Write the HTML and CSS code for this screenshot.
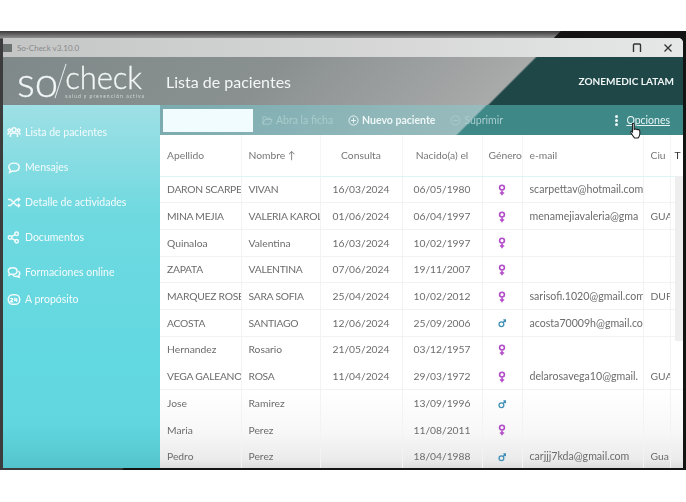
FILE: index.html
```html
<!DOCTYPE html>
<html lang="es">
<head>
    <meta charset="UTF-8">
    <meta name="viewport" content="width=device-width, initial-scale=1.0">
    <title>So-Check - Lista de pacientes</title>
    <link rel="stylesheet" href="styles.css">
</head>
<body>
    <!-- Gender icons, reused in the table -->
    <svg class="sprite">
        <symbol id="female" viewBox="0 0 10 15"><circle cx="5" cy="4.500" r="3"/><path d="M5 8v6M2.300 11.300h5.400"/></symbol>
        <symbol id="male" viewBox="0 0 10 15"><circle cx="4.300" cy="9" r="3"/><path d="M6.500 6.800l3-3M6.700 3.500h3v3"/></symbol>
    </svg>

    <div class="frame">
        <div class="window">
            <!-- Title bar -->
            <div class="titlebar">
                <span class="app-icon"></span>
                <span class="app-name">So-Check v3.10.0</span>
                <span class="win-btn">
                    <svg width="10" height="10" viewBox="0 0 10 10"><path d="M1.500 9V2a1 1 0 0 1 1-1h5a1 1 0 0 1 1 1v7" fill="none" stroke="#333" stroke-width="1.400"/></svg>
                </span>
                <span class="win-btn">
                    <svg width="10" height="10" viewBox="0 0 10 10"><path d="M1.500 1.500l7 7M8.500 1.500l-7 7" fill="none" stroke="#333" stroke-width="1.300"/></svg>
                </span>
            </div>

            <!-- Header -->
            <div class="header">
                <div class="logo">
                    <span class="logo-so">so</span>
                    <span class="logo-slash"></span>
                    <div class="logo-right">
                        <span class="logo-check">check</span>
                        <span class="logo-sub">salud y prevención activa</span>
                    </div>
                </div>
                <div class="page-title">Lista de pacientes</div>
                <div class="org">ZONEMEDIC LATAM</div>
            </div>

            <div class="main">
                <!-- Sidebar -->
                <nav class="sidebar">
                    <a class="nav-item">
                        <svg class="nav-icon" viewBox="0 0 16 14"><circle cx="8" cy="4" r="2.300"/><circle cx="2.800" cy="4.500" r="1.600"/><circle cx="13.200" cy="4.500" r="1.600"/><path d="M4 12V9.500Q4 7.500 8 7.500T12 9.500V12M1 9.500Q1 7.300 3.500 7.300M15 9.500Q15 7.300 12.500 7.300"/></svg>
                        Lista de pacientes
                    </a>
                    <a class="nav-item">
                        <svg class="nav-icon" viewBox="0 0 16 14"><path d="M8 2C4.300 2 2 4 2 6.500c0 1.400.7 2.500 1.800 3.300L3 12.500l3.200-1.500c.6.100 1.200.2 1.800.2 3.700 0 6-2.100 6-4.700S11.700 2 8 2z"/></svg>
                        Mensajes
                    </a>
                    <a class="nav-item">
                        <svg class="nav-icon" viewBox="0 0 16 14"><path d="M1 3.500h3l7 7h3M1 10.500h3l7-7h3M12.500 1.500l2 2-2 2M12.500 8.500l2 2-2 2"/></svg>
                        Detalle de actividades
                    </a>
                    <a class="nav-item">
                        <svg class="nav-icon" viewBox="0 0 16 14"><circle cx="3.500" cy="7" r="2"/><circle cx="11" cy="2.800" r="2"/><circle cx="11" cy="11.200" r="2"/><path d="M5.300 6l3.900-2.200M5.300 8l3.900 2.200"/></svg>
                        Documentos
                    </a>
                    <a class="nav-item nav-tight">
                        <svg class="nav-icon" viewBox="0 0 16 14"><path d="M6.500 1.500C3.500 1.500 1.500 3.200 1.500 5.300c0 1 .5 1.900 1.300 2.600L2.300 10l2.500-1.100c.5.100 1.100.2 1.700.2 3 0 5-1.700 5-3.800s-2-3.800-5-3.800z"/><path d="M13 5.500c1 .6 1.600 1.500 1.600 2.600 0 .9-.4 1.700-1.100 2.300l.4 2.100-2.400-1.100c-2 .3-3.800-.2-4.800-1.400"/></svg>
                        Formaciones online
                    </a>
                    <a class="nav-item">
                        <svg class="nav-icon" viewBox="0 0 16 14"><rect x="1.500" y="1.500" width="13" height="11" rx="5"/><path d="M4 6.500c0-1 2.500-1 2.500.3L4 9.500h3M9 5v3h2.500M11 5.500v4"/></svg>
                        A propósito
                    </a>
                </nav>

                <div class="content">
                    <!-- Toolbar -->
                    <div class="toolbar">
                        <input class="search" type="text">
                        <span class="tool tool-off">
                            <svg class="tool-icon" viewBox="0 0 12 12"><path d="M1 10V2h3l1 1.500h4V5M1 10l2-5h8l-2 5z"/></svg>
                            Abra la ficha
                        </span>
                        <span class="tool tool-on">
                            <svg class="tool-icon" viewBox="0 0 12 12"><circle cx="6" cy="6" r="5"/><path d="M6 3.300v5.400M3.300 6h5.400"/></svg>
                            Nuevo paciente
                        </span>
                        <span class="tool tool-off">
                            <svg class="tool-icon" viewBox="0 0 12 12"><circle cx="6" cy="6" r="5"/><path d="M3.300 6h5.400"/></svg>
                            Suprimir
                        </span>
                        <span class="options">
                            <span class="dots"><i></i><i></i><i></i></span>
                            <span class="options-link">Opciones</span>
                            <svg class="cursor" width="13" height="17" viewBox="0 0 13 17"><path d="M3.500 1.500c.8-.6 1.700 0 1.700 1v5l.3-.2c.6-.4 1.300-.3 1.700.2.600-.4 1.300-.3 1.700.3.600-.3 1.300-.1 1.600.5.400.8.500 2.400.3 4-.2 1.500-.8 2.800-1.800 3.700H5.500C4.500 14.700 2.800 12.500 1.800 10.500c-.4-.9.600-1.600 1.300-1l.4.500z" fill="#fff" stroke="#222" stroke-width="1.100"/></svg>
                        </span>
                    </div>

                    <!-- Patient table -->
                    <div class="table-wrap">
                        <table class="patients">
                            <colgroup>
                                <col class="c-apellido"><col class="c-nombre"><col class="c-consulta"><col class="c-nacido"><col class="c-genero"><col class="c-email"><col class="c-ciudad"><col class="c-t">
                            </colgroup>
                            <thead>
                                <tr>
                                    <th>Apellido</th><th>Nombre ↑</th><th class="center">Consulta</th><th class="center">Nacido(a) el</th><th class="gender-head">Género</th><th>e-mail</th><th>Ciu</th><th class="t-head">T</th>
                                </tr>
                            </thead>
                            <tbody>
                                <tr class="caps"><td>DARON SCARPE</td><td>VIVAN</td><td class="center">16/03/2024</td><td class="center">06/05/1980</td><td class="center"><svg class="g-f"><use href="#female"/></svg></td><td>scarpettav@hotmail.com</td><td></td><td></td></tr>
                                <tr class="caps"><td>MINA MEJIA</td><td>VALERIA KAROL</td><td class="center">01/06/2024</td><td class="center">06/04/1997</td><td class="center"><svg class="g-f"><use href="#female"/></svg></td><td>menamejiavaleria@gma</td><td>GUA</td><td></td></tr>
                                <tr><td>Quinaloa</td><td>Valentina</td><td class="center">16/03/2024</td><td class="center">10/02/1997</td><td class="center"><svg class="g-f"><use href="#female"/></svg></td><td></td><td></td><td></td></tr>
                                <tr class="caps"><td>ZAPATA</td><td>VALENTINA</td><td class="center">07/06/2024</td><td class="center">19/11/2007</td><td class="center"><svg class="g-f"><use href="#female"/></svg></td><td></td><td></td><td></td></tr>
                                <tr class="caps"><td>MARQUEZ ROSE</td><td>SARA SOFIA</td><td class="center">25/04/2024</td><td class="center">10/02/2012</td><td class="center"><svg class="g-f"><use href="#female"/></svg></td><td>sarisofi.1020@gmail.com</td><td>DUF</td><td></td></tr>
                                <tr class="caps"><td>ACOSTA</td><td>SANTIAGO</td><td class="center">12/06/2024</td><td class="center">25/09/2006</td><td class="center"><svg class="g-m"><use href="#male"/></svg></td><td>acosta70009h@gmail.co</td><td></td><td></td></tr>
                                <tr class="no-line"><td>Hernandez</td><td>Rosario</td><td class="center">21/05/2024</td><td class="center">03/12/1957</td><td class="center"><svg class="g-f"><use href="#female"/></svg></td><td></td><td></td><td></td></tr>
                                <tr class="caps"><td>VEGA GALEANO</td><td>ROSA</td><td class="center">11/04/2024</td><td class="center">29/03/1972</td><td class="center"><svg class="g-f"><use href="#female"/></svg></td><td>delarosavega10@gmail.</td><td>GUA</td><td></td></tr>
                                <tr class="no-line"><td>Jose</td><td>Ramirez</td><td></td><td class="center">13/09/1996</td><td class="center"><svg class="g-m"><use href="#male"/></svg></td><td></td><td></td><td></td></tr>
                                <tr><td>Maria</td><td>Perez</td><td></td><td class="center">11/08/2011</td><td class="center"><svg class="g-f"><use href="#female"/></svg></td><td></td><td></td><td></td></tr>
                                <tr><td>Pedro</td><td>Perez</td><td></td><td class="center">18/04/1988</td><td class="center"><svg class="g-m"><use href="#male"/></svg></td><td>carjjj7kda@gmail.com</td><td>Gua</td><td></td></tr>
                            </tbody>
                        </table>
                        <div class="scrollbar"></div>
                    </div>
                </div>
            </div>
        </div>
    </div>
</body>
</html>
```

FILE: styles.css
```css
/* Global styling */
* { box-sizing: border-box; margin: 0; padding: 0; }
body { background: #fff; font-family: Lato, "Open Sans", sans-serif; color: #6c6c6c; overflow: hidden; }
.sprite { display: none; }

/* Dark video frame around the window */
.frame {
    margin-top: 31px; width: 686px; height: 439px; padding: 7px 3px 2px 3px;
    background: linear-gradient(135deg, transparent 396px, #141414 397px), linear-gradient(180deg, #3a3a3a 0, #8f8f8f 7px, #3c3c3c 8px);
}
.window { height: 430px; display: flex; flex-direction: column; background: #fff; border-radius: 0 5px 0 0; overflow: hidden; filter: blur(.5px); }

/* Title bar */
.titlebar { height: 19px; flex: none; display: flex; align-items: center; background: linear-gradient(90deg, #c4c6c6, #d8d8d8 60%, #e6e8e8); }
.app-icon { width: 9px; height: 8px; background: #6d7272; margin-right: 5px; }
.app-name { font-size: 8px; color: #888; flex: 1; }
.win-btn { width: 31px; display: flex; justify-content: center; }

/* Header */
.header {
    height: 48px; flex: none; display: flex; align-items: center; padding-left: 14px;
    background: linear-gradient(135deg, #7f8989 0, #8a9090 200px, #a9aaaa 376px, #1f4748 378px, #1f4748 100%);
}
.logo { display: flex; align-items: flex-end; color: #f2f6f6; width: 149px; height: 42px; margin-bottom: 5px; -webkit-text-stroke: .3px #f2f6f6; }
.logo-so { font-size: 42px; font-weight: 300; line-height: 38px; }
.logo-slash { width: 1px; height: 36px; background: #e6ecec; transform: rotate(18deg); margin: 0 4px 1px 2px; }
.logo-right { display: flex; flex-direction: column; }
.logo-check { font-size: 31px; font-weight: 300; line-height: 31px; letter-spacing: -.1px; }
.logo-sub { font-size: 5px; line-height: 7px; letter-spacing: 1px; opacity: .7; white-space: nowrap; -webkit-text-stroke: 0; }
.page-title { font-size: 16px; color: #f2f6f6; flex: 1; }
.org { font-size: 10px; font-weight: 700; color: #f0f5f5; padding-right: 9px; }

/* Main area */
.main { flex: 1; display: flex; min-height: 0; }
.sidebar { width: 157px; flex: none; padding-top: 17px; background: linear-gradient(180deg, #9ee0e5 0, #6fd9e0 110px, #62d8e0 250px, #61d6de 320px, #54c4cc 100%); }
.nav-item { display: flex; align-items: center; gap: 4px; padding-left: 4px; font-size: 10.500px; color: #f4fbfc; white-space: nowrap; height: 20px; margin-bottom: 15px; }
.nav-tight { margin-bottom: 7px; }
.nav-icon { width: 14px; height: 13px; fill: none; stroke: #f4fbfc; stroke-width: 1.700; flex: none; }

.content { flex: 1; min-width: 0; display: flex; flex-direction: column; }

/* Toolbar */
.toolbar {
    height: 30px; flex: none; display: flex; align-items: center; padding-left: 3px; font-size: 10.500px;
    background: linear-gradient(135deg, #7aabaf 0, #98bbbd 230px, #3f8888 232px, #3f8888 100%);
}
.search { width: 90px; height: 23px; background: #f0fcfd; border: none; margin-right: 9px; }
.tool { display: flex; align-items: center; gap: 3px; margin-right: 15px; white-space: nowrap; }
.tool-on { color: #eef6f6; font-weight: 700; }
.tool-off { color: #a9cccd; }
.tool-icon { width: 11px; height: 11px; fill: none; stroke: currentColor; stroke-width: 1; }
.options { margin-left: auto; display: flex; align-items: center; gap: 8px; padding-right: 13px; position: relative; z-index: 2; }
.dots { display: flex; flex-direction: column; gap: 1px; }
.dots i { width: 3px; height: 3px; background: #f0f8f8; border-radius: 50%; }
.options-link { color: #e8f4f4; text-decoration: underline; }
.cursor { position: absolute; left: 14px; top: 8px; }

/* Table */
.table-wrap { flex: 1; min-height: 0; overflow: hidden; position: relative; background: linear-gradient(180deg, #fff 0, #fff 255px, #f8f8f8 295px, #ebebeb 325px, #ddd 333px); }
.patients { border-collapse: collapse; table-layout: fixed; width: 523px; font-size: 10.300px; }
.c-apellido { width: 81px; } .c-nombre { width: 79px; } .c-consulta { width: 82px; } .c-nacido { width: 80px; }
.c-genero { width: 40px; } .c-email { width: 121px; } .c-ciudad { width: 27px; } .c-t { width: 13px; }
.patients th { height: 41px; font-weight: 400; font-size: 10.300px; text-align: left; color: #777; padding-left: 7px; border-right: 1px solid #f4f6f6; border-bottom: 1px solid #dcf6f8; white-space: nowrap; overflow: hidden; }
.patients td { height: 26.700px; padding-left: 7px; border-right: 1px solid #f2f3f3; border-bottom: 1px solid #f2f2f2; white-space: nowrap; overflow: hidden; }
.patients td:nth-child(6) { font-size: 10.600px; }
.patients .caps td:nth-child(-n+2) { letter-spacing: -.25px; }
.patients .no-line td { border-bottom-color: transparent; }
.patients th.center, .patients td.center { text-align: center; padding-left: 0; }
.patients th.gender-head { padding-left: 6px; }
.patients th.t-head { padding-left: 4px; color: #333; }
.patients svg { width: 8px; height: 12px; fill: none; vertical-align: middle; }
.g-f { stroke: #b24cc8; stroke-width: 2; }
.g-m { stroke: #3f8fb8; stroke-width: 1.600; }
.scrollbar { position: absolute; right: 0; top: 41px; height: 165px; width: 8px; background: #eeeeee; }
```
